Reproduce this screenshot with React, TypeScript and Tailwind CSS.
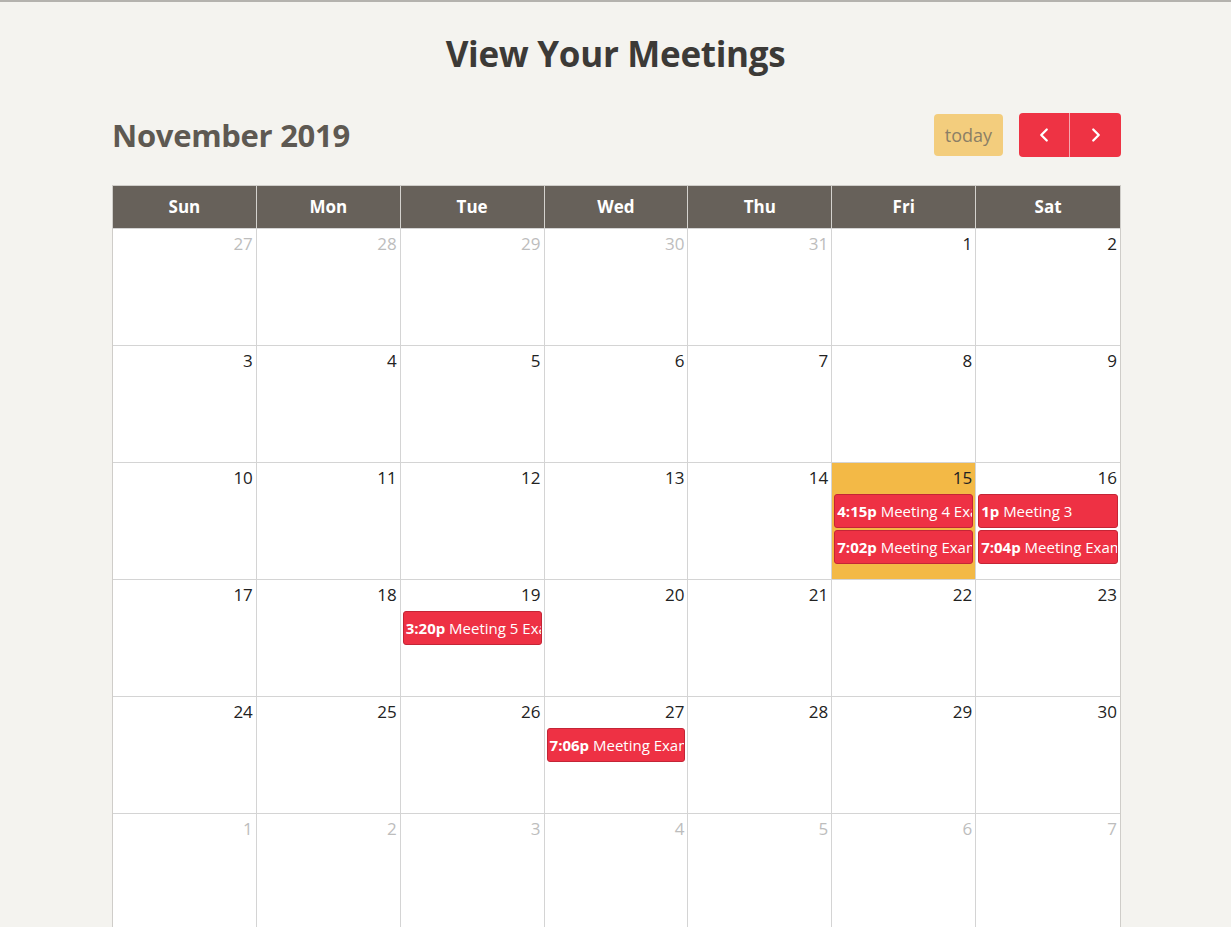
import { ChevronLeft, ChevronRight } from "lucide-react";

type Ev = { time: string; title: string };

const events: Record<string, Ev[]> = {
  "15": [
    { time: "4:15p", title: "Meeting 4 Example" },
    { time: "7:02p", title: "Meeting Example" },
  ],
  "16": [
    { time: "1p", title: "Meeting 3" },
    { time: "7:04p", title: "Meeting Example" },
  ],
  "19": [{ time: "3:20p", title: "Meeting 5 Example" }],
  "27": [{ time: "7:06p", title: "Meeting Example" }],
};

const days = ["Sun", "Mon", "Tue", "Wed", "Thu", "Fri", "Sat"];

function buildWeeks() {
  const cells: { n: number; other: boolean }[] = [];
  for (let d = 27; d <= 31; d++) cells.push({ n: d, other: true });
  for (let d = 1; d <= 30; d++) cells.push({ n: d, other: false });
  for (let d = 1; d <= 7; d++) cells.push({ n: d, other: true });
  const weeks = [];
  for (let i = 0; i < cells.length; i += 7) weeks.push(cells.slice(i, i + 7));
  return weeks;
}

export default function App() {
  const weeks = buildWeeks();
  return (
    <main
      className="min-h-screen bg-[#f4f3ef] border-t-2 border-[#b4b2ae]"
      style={{ fontFamily: '"Open Sans", "Noto Sans", sans-serif' }}
    >
      <h1 className="text-center text-[35px] font-bold text-[#3c3a37] pt-[30px] leading-[44px] tracking-[-0.3px]">
        View Your Meetings
      </h1>

      <div className="ml-[112px] mr-[110px] mt-[37px]">
        <div className="flex items-center justify-between h-[44px]">
          <h2 className="text-[31px] font-bold text-[#5e5952] tracking-[-0.3px]">November 2019</h2>
          <div className="flex items-center gap-4">
            <button className="h-[42px] px-[11px] rounded-[4px] bg-[#f3cd7d] text-[#8b7f66] text-[18px]">
              today
            </button>
            <div className="flex h-[44px] rounded-[4px] overflow-hidden">
              <button className="w-[51px] bg-[#ee3344] text-white flex items-center justify-center border-r border-[#f6a7ae]">
                <ChevronLeft size={22} strokeWidth={2.5} />
              </button>
              <button className="w-[51px] bg-[#ee3344] text-white flex items-center justify-center">
                <ChevronRight size={22} strokeWidth={2.5} />
              </button>
            </div>
          </div>
        </div>

        <div className="mt-[28px] border border-[#cfcdc9] bg-white">
          <div className="grid grid-cols-7 bg-[#67615a]">
            {days.map((d, i) => (
              <div
                key={d}
                className={`h-[42px] flex items-center justify-center text-white font-bold text-[17px] ${
                  i < 6 ? "border-r border-[#d4d2ce]" : ""
                }`}
              >
                {d}
              </div>
            ))}
          </div>
          {weeks.map((w, wi) => (
            <div key={wi} className="grid grid-cols-7 border-t border-[#d4d4d4]">
              {w.map((c, ci) => {
                const key = c.other ? "" : String(c.n);
                const isToday = !c.other && c.n === 15;
                const evs = events[key] || [];
                return (
                  <div
                    key={ci}
                    className={`h-[116px] min-w-0 ${ci < 6 ? "border-r border-[#d4d4d4]" : ""} ${
                      isToday ? "bg-[#f3b946]" : ""
                    }`}
                  >
                    <div
                      className={`text-right pr-[3px] pt-[5px] text-[17px] leading-[20px] ${
                        c.other ? "text-[#bdbdbd]" : "text-[#222]"
                      }`}
                    >
                      {c.n}
                    </div>
                    <div className="flex flex-col gap-[2px] mt-[6px] px-[2px]">
                      {evs.map((e, ei) => (
                        <div
                          key={ei}
                          className="h-[34px] bg-[#ee3144] border border-[#c42536] rounded-[3px] text-white text-[15px] leading-[32px] px-[2px] whitespace-nowrap overflow-hidden"
                        >
                          <span className="font-bold">{e.time}</span> {e.title}
                        </div>
                      ))}
                    </div>
                  </div>
                );
              })}
            </div>
          ))}
        </div>
      </div>
    </main>
  );
}
